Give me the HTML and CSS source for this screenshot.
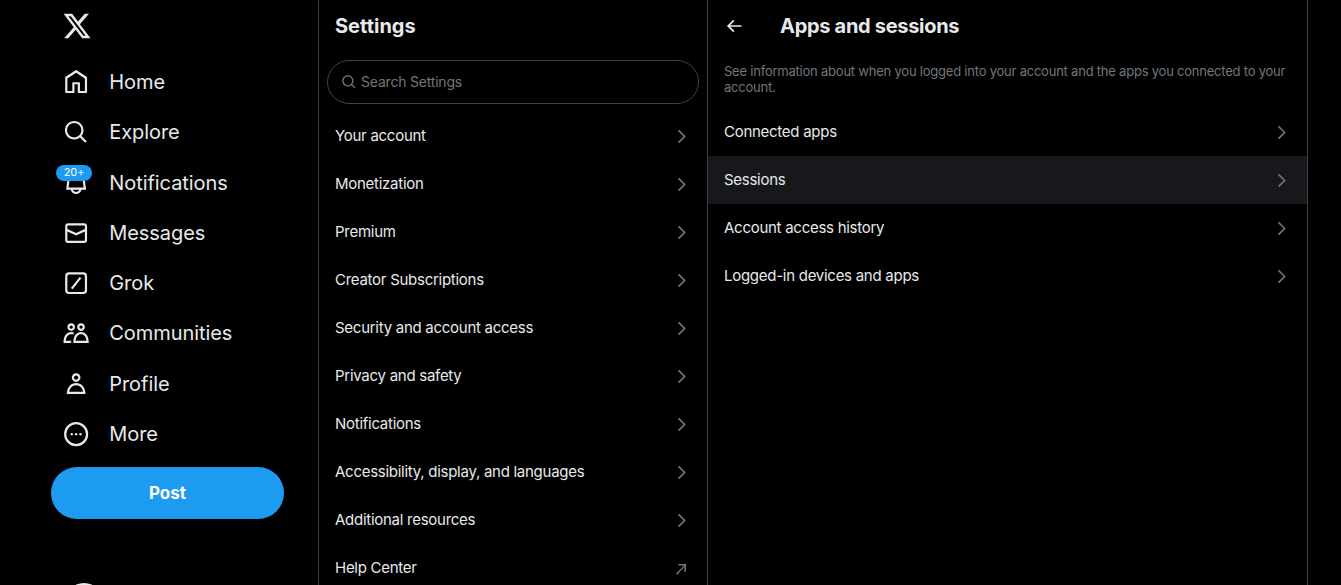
FILE: index.html
```html
<!DOCTYPE html>
<html lang="en">
<head>
    <meta charset="UTF-8">
    <meta name="viewport" content="width=device-width, initial-scale=1.0">
    <title>Apps and sessions / X</title>
    <link rel="stylesheet" href="styles.css">
</head>
<body>
    <div class="app">
        <header class="sidebar">
            <svg class="logo" viewBox="0 0 24 24"><path d="M18.244 2.25h3.308l-7.227 8.26 8.502 11.24H16.17l-5.214-6.817L4.99 21.75H1.68l7.73-8.835L1.254 2.25H8.08l4.713 6.231zm-1.161 17.52h1.833L7.084 4.126H5.117z"/></svg>
            <nav class="nav">
                <a class="nav-item">
                    <svg class="nav-icon" viewBox="0 0 24 24"><path d="M21.591 7.146L12.52 1.157c-.316-.21-.724-.21-1.04 0l-9.071 5.99c-.26.173-.409.456-.409.757v13.183c0 .502.418.913.929.913h6.638c.511 0 .929-.41.929-.913v-7.075h3.008v7.075c0 .502.418.913.929.913h6.639c.51 0 .928-.41.928-.913V7.904c0-.301-.158-.584-.408-.758zM20 20l-4.5.01.011-7.097c0-.502-.418-.913-.928-.913H9.44c-.511 0-.929.41-.929.913L8.5 20H4V8.773l8.011-5.342L20 8.764z"/></svg>
                    <span>Home</span>
                </a>
                <a class="nav-item">
                    <svg class="nav-icon" viewBox="0 0 24 24"><path d="M10.25 3.75c-3.59 0-6.5 2.91-6.5 6.5s2.91 6.5 6.5 6.5c1.795 0 3.419-.726 4.596-1.904 1.178-1.177 1.904-2.801 1.904-4.596 0-3.59-2.91-6.5-6.5-6.5zm-8.5 6.5c0-4.694 3.806-8.5 8.5-8.5s8.5 3.806 8.5 8.5c0 1.986-.682 3.815-1.824 5.262l4.781 4.781-1.414 1.414-4.781-4.781c-1.447 1.142-3.276 1.824-5.262 1.824-4.694 0-8.5-3.806-8.5-8.5z"/></svg>
                    <span>Explore</span>
                </a>
                <a class="nav-item">
                    <svg class="nav-icon" viewBox="0 0 24 24"><path d="M19.993 9.042C19.48 5.017 16.054 2 11.996 2s-7.49 3.021-7.999 7.051L2.866 18H7.1c.463 2.282 2.481 4 4.9 4s4.437-1.718 4.9-4h4.236l-1.143-8.958zM12 20c-1.306 0-2.417-.835-2.829-2h5.658c-.412 1.165-1.523 2-2.829 2zm-6.866-4l.847-6.698C6.364 6.272 8.941 4 11.996 4s5.627 2.268 6.013 5.295L18.864 16H5.134z"/></svg>
                    <span class="badge">20+</span>
                    <span>Notifications</span>
                </a>
                <a class="nav-item">
                    <svg class="nav-icon" viewBox="0 0 24 24"><path d="M1.998 5.5c0-1.381 1.119-2.5 2.5-2.5h15c1.381 0 2.5 1.119 2.5 2.5v13c0 1.381-1.119 2.5-2.5 2.5h-15c-1.381 0-2.5-1.119-2.5-2.5v-13zm2.5-.5c-.276 0-.5.224-.5.5v2.764l8 3.638 8-3.636V5.5c0-.276-.224-.5-.5-.5h-15zm15.5 5.463l-8 3.636-8-3.638V18.5c0 .276.224.5.5.5h15c.276 0 .5-.224.5-.5v-8.037z"/></svg>
                    <span>Messages</span>
                </a>
                <a class="nav-item">
                    <svg class="nav-icon" viewBox="0 0 24 24"><rect x="3" y="3" width="18" height="18" rx="2.5" fill="none" stroke="currentColor" stroke-width="2"/><path d="M8 17 16 7" fill="none" stroke="currentColor" stroke-width="2"/></svg>
                    <span>Grok</span>
                </a>
                <a class="nav-item">
                    <svg class="nav-icon" viewBox="0 0 24 24"><path d="M7.501 19.917L7.471 21H.472l.029-1.027c.184-6.618 3.736-8.977 7-8.977.963 0 1.95.212 2.87.672-.444.478-.851 1.03-1.212 1.656-.507-.204-1.054-.329-1.658-.329-2.767 0-4.57 2.223-4.938 6.004H7.56c-.023.302-.05.599-.059.917zm15.998.056L23.528 21H9.472l.029-1.027c.184-6.618 3.736-8.977 7-8.977s6.816 2.358 7 8.977zM21.437 19c-.367-3.781-2.17-6.004-4.938-6.004s-4.57 2.223-4.938 6.004h9.875zm-4.938-9c-.799 0-1.527-.279-2.116-.73-.836-.64-1.384-1.638-1.384-2.77 0-1.93 1.567-3.5 3.5-3.5s3.5 1.57 3.5 3.5c0 1.132-.548 2.13-1.384 2.77-.589.451-1.317.73-2.116.73zm-1.5-3.5c0 .827.673 1.5 1.5 1.5s1.5-.673 1.5-1.5-.673-1.5-1.5-1.5-1.5.673-1.5 1.5zM7.5 3C9.433 3 11 4.57 11 6.5S9.433 10 7.5 10 4 8.43 4 6.5 5.567 3 7.5 3zm0 2C6.673 5 6 5.673 6 6.5S6.673 8 7.5 8 9 7.327 9 6.5 8.327 5 7.5 5z"/></svg>
                    <span>Communities</span>
                </a>
                <a class="nav-item">
                    <svg class="nav-icon" viewBox="0 0 24 24"><path d="M5.651 19h12.698c-.337-1.8-1.023-3.21-1.945-4.19C15.318 13.65 13.838 13 12 13s-3.317.65-4.404 1.81c-.922.98-1.608 2.39-1.945 4.19zm.486-5.56C7.627 11.85 9.648 11 12 11s4.373.85 5.863 2.44c1.477 1.58 2.366 3.8 2.632 6.46l.11 1.1H3.395l.11-1.1c.266-2.66 1.155-4.88 2.632-6.46zM12 4c-1.105 0-2 .9-2 2s.895 2 2 2 2-.9 2-2-.895-2-2-2zM8 6c0-2.21 1.791-4 4-4s4 1.79 4 4-1.791 4-4 4-4-1.79-4-4z"/></svg>
                    <span>Profile</span>
                </a>
                <a class="nav-item">
                    <svg class="nav-icon" viewBox="0 0 24 24"><circle cx="12" cy="12" r="10" fill="none" stroke="currentColor" stroke-width="2"/><circle cx="8" cy="12" r="1.1"/><circle cx="12" cy="12" r="1.1"/><circle cx="16" cy="12" r="1.1"/></svg>
                    <span>More</span>
                </a>
            </nav>
            <button class="post-btn">Post</button>
            <div class="avatar"></div>
        </header>

        <section class="settings">
            <h2 class="settings-title">Settings</h2>
            <div class="search">
                <svg class="search-icon" viewBox="0 0 24 24"><path d="M10.25 3.75c-3.59 0-6.5 2.91-6.5 6.5s2.91 6.5 6.5 6.5c1.795 0 3.419-.726 4.596-1.904 1.178-1.177 1.904-2.801 1.904-4.596 0-3.59-2.91-6.5-6.5-6.5zm-8.5 6.5c0-4.694 3.806-8.5 8.5-8.5s8.5 3.806 8.5 8.5c0 1.986-.682 3.815-1.824 5.262l4.781 4.781-1.414 1.414-4.781-4.781c-1.447 1.142-3.276 1.824-5.262 1.824-4.694 0-8.5-3.806-8.5-8.5z"/></svg>
                <span>Search Settings</span>
            </div>
            <div class="row"><span>Your account</span><svg class="chevron" viewBox="0 0 24 24"><path d="M14.586 12L7.543 4.96l1.414-1.42L17.414 12l-8.457 8.46-1.414-1.42L14.586 12z"/></svg></div>
            <div class="row"><span>Monetization</span><svg class="chevron" viewBox="0 0 24 24"><path d="M14.586 12L7.543 4.96l1.414-1.42L17.414 12l-8.457 8.46-1.414-1.42L14.586 12z"/></svg></div>
            <div class="row"><span>Premium</span><svg class="chevron" viewBox="0 0 24 24"><path d="M14.586 12L7.543 4.96l1.414-1.42L17.414 12l-8.457 8.46-1.414-1.42L14.586 12z"/></svg></div>
            <div class="row"><span>Creator Subscriptions</span><svg class="chevron" viewBox="0 0 24 24"><path d="M14.586 12L7.543 4.96l1.414-1.42L17.414 12l-8.457 8.46-1.414-1.42L14.586 12z"/></svg></div>
            <div class="row"><span>Security and account access</span><svg class="chevron" viewBox="0 0 24 24"><path d="M14.586 12L7.543 4.96l1.414-1.42L17.414 12l-8.457 8.46-1.414-1.42L14.586 12z"/></svg></div>
            <div class="row"><span>Privacy and safety</span><svg class="chevron" viewBox="0 0 24 24"><path d="M14.586 12L7.543 4.96l1.414-1.42L17.414 12l-8.457 8.46-1.414-1.42L14.586 12z"/></svg></div>
            <div class="row"><span>Notifications</span><svg class="chevron" viewBox="0 0 24 24"><path d="M14.586 12L7.543 4.96l1.414-1.42L17.414 12l-8.457 8.46-1.414-1.42L14.586 12z"/></svg></div>
            <div class="row"><span>Accessibility, display, and languages</span><svg class="chevron" viewBox="0 0 24 24"><path d="M14.586 12L7.543 4.96l1.414-1.42L17.414 12l-8.457 8.46-1.414-1.42L14.586 12z"/></svg></div>
            <div class="row"><span>Additional resources</span><svg class="chevron" viewBox="0 0 24 24"><path d="M14.586 12L7.543 4.96l1.414-1.42L17.414 12l-8.457 8.46-1.414-1.42L14.586 12z"/></svg></div>
            <div class="row"><span>Help Center</span><svg class="chevron" viewBox="0 0 24 24"><path d="M5 18.6 15.2 8.3H8V6.3h9.7V16h-2V9.7L6.4 20z"/></svg></div>
        </section>

        <main class="detail">
            <div class="detail-header">
                <svg class="back" viewBox="0 0 24 24"><path d="M7.414 13l5.043 5.04-1.414 1.42L3.586 12l7.457-7.46 1.414 1.42L7.414 11H21v2H7.414z"/></svg>
                <h2 class="detail-title">Apps and sessions</h2>
            </div>
            <p class="detail-desc">See information about when you logged into your account and the apps you connected to your account.</p>
            <div class="row"><span>Connected apps</span><svg class="chevron" viewBox="0 0 24 24"><path d="M14.586 12L7.543 4.96l1.414-1.42L17.414 12l-8.457 8.46-1.414-1.42L14.586 12z"/></svg></div>
            <div class="row active"><span>Sessions</span><svg class="chevron" viewBox="0 0 24 24"><path d="M14.586 12L7.543 4.96l1.414-1.42L17.414 12l-8.457 8.46-1.414-1.42L14.586 12z"/></svg></div>
            <div class="row"><span>Account access history</span><svg class="chevron" viewBox="0 0 24 24"><path d="M14.586 12L7.543 4.96l1.414-1.42L17.414 12l-8.457 8.46-1.414-1.42L14.586 12z"/></svg></div>
            <div class="row"><span>Logged-in devices and apps</span><svg class="chevron" viewBox="0 0 24 24"><path d="M14.586 12L7.543 4.96l1.414-1.42L17.414 12l-8.457 8.46-1.414-1.42L14.586 12z"/></svg></div>
        </main>
    </div>
</body>
</html>
```

FILE: styles.css
```css
html, body {
    margin: 0;
    height: 100%;
    background-color: #000;
    overflow: hidden;
}

body {
    font-family: Inter, "Liberation Sans", sans-serif;
    color: #e7e9ea;
}

svg {
    fill: currentColor;
    flex-shrink: 0;
}

.app {
    display: flex;
    height: 585px;
    overflow: hidden;
}

/* left navigation */
.sidebar {
    width: 267px;
    padding-left: 51px;
    flex-shrink: 0;
    display: flex;
    flex-direction: column;
}

.logo {
    width: 30px;
    height: 30px;
    margin: 11px 0 0 11px;
}

.nav {
    margin-top: 16px;
    display: flex;
    flex-direction: column;
}

.nav-item {
    height: 50.25px;
    padding-left: 12px;
    display: flex;
    align-items: center;
    gap: 20px;
    font-size: 20px;
    letter-spacing: -0.06px;
    position: relative;
}

.nav-icon {
    width: 26.25px;
    height: 26.25px;
}

.badge {
    position: absolute;
    left: 5px;
    top: 7px;
    width: 36px;
    height: 16px;
    border-radius: 8px;
    background-color: #1d9bf0;
    color: #fff;
    font-size: 11px;
    line-height: 15px;
    text-align: center;
}

.post-btn {
    width: 233px;
    height: 52px;
    margin-top: 8px;
    border: none;
    border-radius: 26px;
    background-color: #1d9bf0;
    color: #fff;
    font-family: inherit;
    font-size: 17px;
    font-weight: 700;
    flex-shrink: 0;
}

.avatar {
    width: 40px;
    height: 40px;
    margin: 64px 0 0 13px;
    border-radius: 50%;
    border-top: 2px solid #e7e9ea;
    flex-shrink: 0;
}

/* settings column */
.settings {
    width: 388px;
    flex-shrink: 0;
    border-left: 1px solid #3f4245;
    border-right: 1px solid #3f4245;
}

.settings-title {
    margin: 0;
    height: 52px;
    padding-left: 16px;
    font-size: 20px;
    font-weight: 700;
    line-height: 52px;
}

.search {
    height: 44px;
    margin: 8px;
    padding: 0 0 1px 13px;
    box-sizing: border-box;
    border: 1px solid #3f4245;
    border-radius: 22px;
    display: flex;
    align-items: center;
    gap: 4px;
    font-size: 14px;
    letter-spacing: -0.2px;
    color: #71767b;
}

.search-icon {
    width: 16px;
    height: 16px;
}

.row {
    height: 48px;
    padding: 0 16px;
    display: flex;
    align-items: center;
    justify-content: space-between;
    font-size: 15px;
    letter-spacing: -0.27px;
}

.row span {
    margin-bottom: 2px;
}

.row.active {
    background-color: #16181c;
}

.chevron {
    width: 19px;
    height: 19px;
    color: #71767b;
}

/* detail column */
.detail {
    width: 599px;
    flex-shrink: 0;
    border-right: 1px solid #3f4245;
}

.detail-header {
    height: 52px;
    padding-left: 16px;
    display: flex;
    align-items: center;
    gap: 36px;
}

.back {
    width: 20px;
    height: 20px;
}

.detail-title {
    margin: 0;
    font-size: 20px;
    font-weight: 700;
    letter-spacing: -0.3px;
}

.detail-desc {
    margin: 0;
    height: 56px;
    padding: 11px 16px 0;
    box-sizing: border-box;
    font-size: 13px;
    line-height: 16px;
    letter-spacing: -0.22px;
    color: #71767b;
}
```
